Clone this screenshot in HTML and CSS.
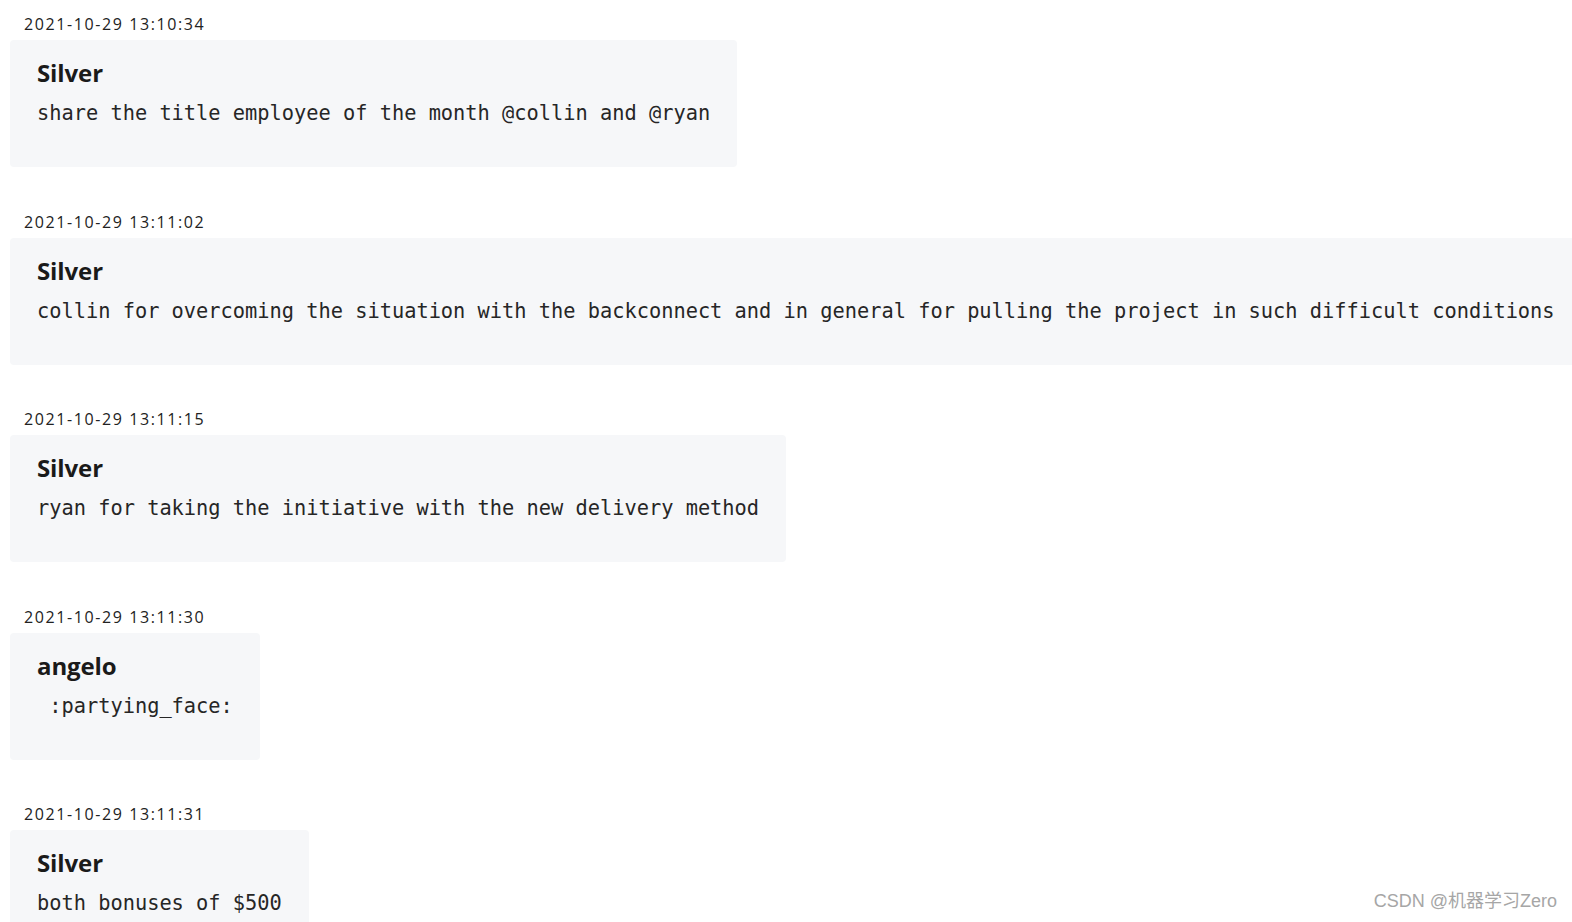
FILE: index.html
```html
<!DOCTYPE html>
<html>
<head>
<meta charset="utf-8">
<link rel="stylesheet" href="styles.css">
</head>
<body>
<div class="log">
  <div class="item">
    <div class="ts">2021-10-29 13:10:34</div>
    <div class="bubble">
      <div class="name">Silver</div>
      <div class="msg">share the title employee of the month @collin and @ryan</div>
    </div>
  </div>
  <div class="item">
    <div class="ts">2021-10-29 13:11:02</div>
    <div class="bubble">
      <div class="name">Silver</div>
      <div class="msg">collin for overcoming the situation with the backconnect and in general for pulling the project in such difficult conditions</div>
    </div>
  </div>
  <div class="item">
    <div class="ts">2021-10-29 13:11:15</div>
    <div class="bubble">
      <div class="name">Silver</div>
      <div class="msg">ryan for taking the initiative with the new delivery method</div>
    </div>
  </div>
  <div class="item">
    <div class="ts">2021-10-29 13:11:30</div>
    <div class="bubble">
      <div class="name">angelo</div>
      <div class="msg"> :partying_face:</div>
    </div>
  </div>
  <div class="item">
    <div class="ts">2021-10-29 13:11:31</div>
    <div class="bubble">
      <div class="name">Silver</div>
      <div class="msg">both bonuses of $500</div>
    </div>
  </div>
</div>
<div class="watermark">CSDN @机器学习Zero</div>
</body>
</html>
```
FILE: styles.css
```css
html, body {
  margin: 0;
  padding: 0;
  background: #ffffff;
  overflow: hidden;
}
body {
  width: 1572px;
  height: 922px;
  position: relative;
  font-family: "Open Sans", "Noto Sans", sans-serif;
  color: #1e1e1e;
}
.log {
  padding: 13px 0 0 10px;
  display: flex;
  flex-direction: column;
  align-items: flex-start;
}
.item {
  display: flex;
  flex-direction: column;
  align-items: flex-start;
  margin-bottom: 43.5px;
}
.ts {
  padding-left: 14px;
  font-size: 16px;
  line-height: 22px;
  letter-spacing: 1.6px;
  color: #222;
}
.bubble {
  margin-top: 5px;
  background: #f6f7f9;
  border-radius: 4px;
  padding: 18px 27px 40px 27px;
}
.name {
  font-weight: 700;
  font-size: 24px;
  line-height: 30px;
  color: #1a1a1a;
  letter-spacing: -0.1px;
}
.msg {
  margin-top: 11px;
  font-family: "DejaVu Sans Mono", "Liberation Mono", monospace;
  font-size: 20.33px;
  line-height: 28px;
  white-space: pre;
  color: #262626;
}
.watermark {
  position: absolute;
  right: 15px;
  bottom: 10px;
  font-family: "Liberation Sans", "Noto Sans CJK SC", sans-serif;
  font-size: 18px;
  line-height: 22px;
  color: #a6a6a6;
}
```
